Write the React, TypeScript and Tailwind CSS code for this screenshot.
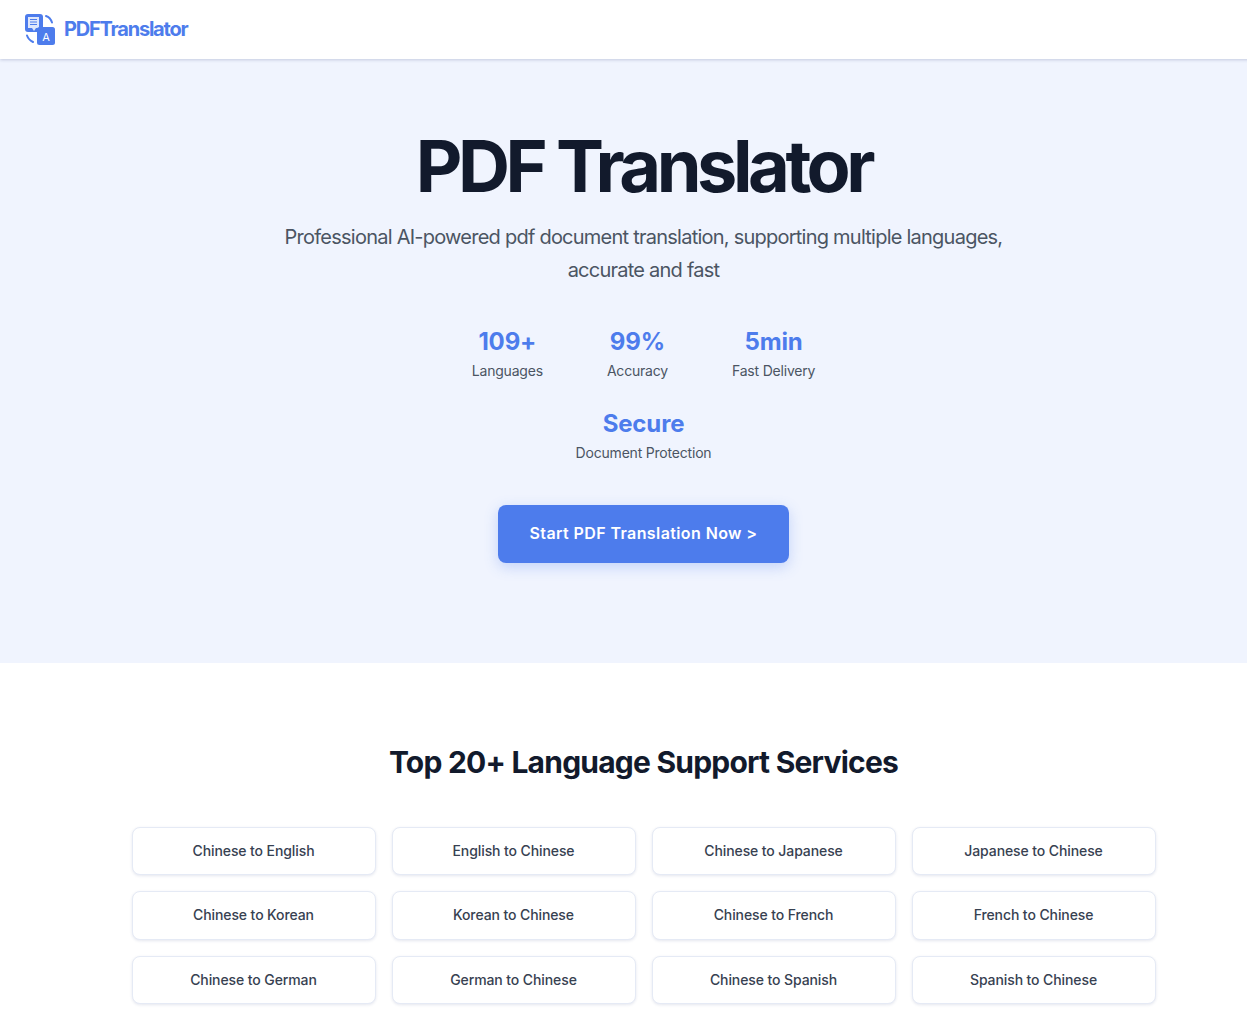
const stats = [
  { value: "109+", label: "Languages" },
  { value: "99%", label: "Accuracy" },
  { value: "5min", label: "Fast Delivery" },
  { value: "Secure", label: "Document Protection" },
];

const services = [
  "Chinese to English",
  "English to Chinese",
  "Chinese to Japanese",
  "Japanese to Chinese",
  "Chinese to Korean",
  "Korean to Chinese",
  "Chinese to French",
  "French to Chinese",
  "Chinese to German",
  "German to Chinese",
  "Chinese to Spanish",
  "Spanish to Chinese",
];

const Logo = () => (
  <svg width="32" height="32" viewBox="0 0 32 32" fill="none">
    <rect x="1" y="0" width="18" height="18" rx="3" fill="#4d7cec" />
    <rect x="4" y="3" width="11" height="11" fill="#dfe7fb" />
    <path d="M6 5.5h7M6 8h7M6 10.5h7" stroke="#4d7cec" strokeWidth="1" />
    <path d="M8 14l2 3 2-3z" fill="#dfe7fb" />
    <path d="M22 2c3 1 5 3.5 6 6.5" stroke="#4d7cec" strokeWidth="2" strokeLinecap="round" />
    <path d="M3 21.5c1 3 3 5 6 6.5" stroke="#4d7cec" strokeWidth="2" strokeLinecap="round" />
    <rect x="13" y="13" width="18" height="18" rx="2.5" fill="#4d7cec" />
    <text x="22" y="27" textAnchor="middle" fontSize="11" fill="#ffffff" fontFamily="Inter, sans-serif">
      A
    </text>
  </svg>
);

export default function App() {
  return (
    <div className="h-[1009px] overflow-hidden bg-white font-['Inter',sans-serif]">
      {/* the page is wider than the window, its content centres on 643.5 */}
      <div className="w-[1287px]">
        <header className="relative z-10 flex h-[59px] items-center gap-[8px] bg-white px-6 shadow-[0_1px_3px_rgba(40,60,120,0.22)]">
          <Logo />
          <span className="mb-[2px] text-xl font-bold tracking-[-1.2px] text-[#4d7cec]">PDFTranslator</span>
        </header>

        <section className="flex h-[604px] flex-col items-center bg-[#f0f4fe] pt-[65px]">
          <h1 className="text-[72px] leading-[84px] font-bold tracking-[-4.45px] text-[#121a2c]">PDF Translator</h1>
          <p className="mt-[13px] max-w-[768px] text-center text-xl leading-[33px] tracking-[-0.76px] text-[#4b5563]">
            Professional AI-powered pdf document translation, supporting multiple languages, accurate and fast
          </p>
          <div className="mt-[39px] flex max-w-[512px] flex-wrap justify-center gap-x-16 gap-y-[26px]">
            {stats.map((stat) => (
              <div key={stat.label} className="flex flex-col items-center">
                <div className="text-2xl leading-[32px] font-bold tracking-[-0.15px] text-[#4d7cec]">{stat.value}</div>
                <div className="mt-[2px] text-sm leading-[22px] tracking-[-0.2px] text-[#4b5563]">{stat.label}</div>
              </div>
            ))}
          </div>
          <button className="mt-[41px] h-[58px] w-[291px] rounded-lg bg-[#4d7cec] pb-[2px] text-base font-semibold tracking-[0.4px] text-white shadow-[0_4px_14px_rgba(77,124,236,0.28)]">
            Start PDF Translation Now &gt;
          </button>
        </section>

        <section className="flex flex-col items-center pt-[81px]">
          <h2 className="text-3xl leading-[36px] font-bold tracking-[-0.78px] text-[#121a2c]">
            Top 20+ Language Support Services
          </h2>
          <div className="mt-[47px] grid w-[1024px] grid-cols-4 gap-4">
            {services.map((service) => (
              <div
                key={service}
                className="rounded-lg border border-[#e5eaf5] bg-white py-3 text-center text-sm leading-[22.4px] font-medium tracking-[-0.1px] text-[#374151] shadow-[0_1px_3px_rgba(40,60,120,0.12)]"
              >
                {service}
              </div>
            ))}
          </div>
        </section>
      </div>
    </div>
  );
}
